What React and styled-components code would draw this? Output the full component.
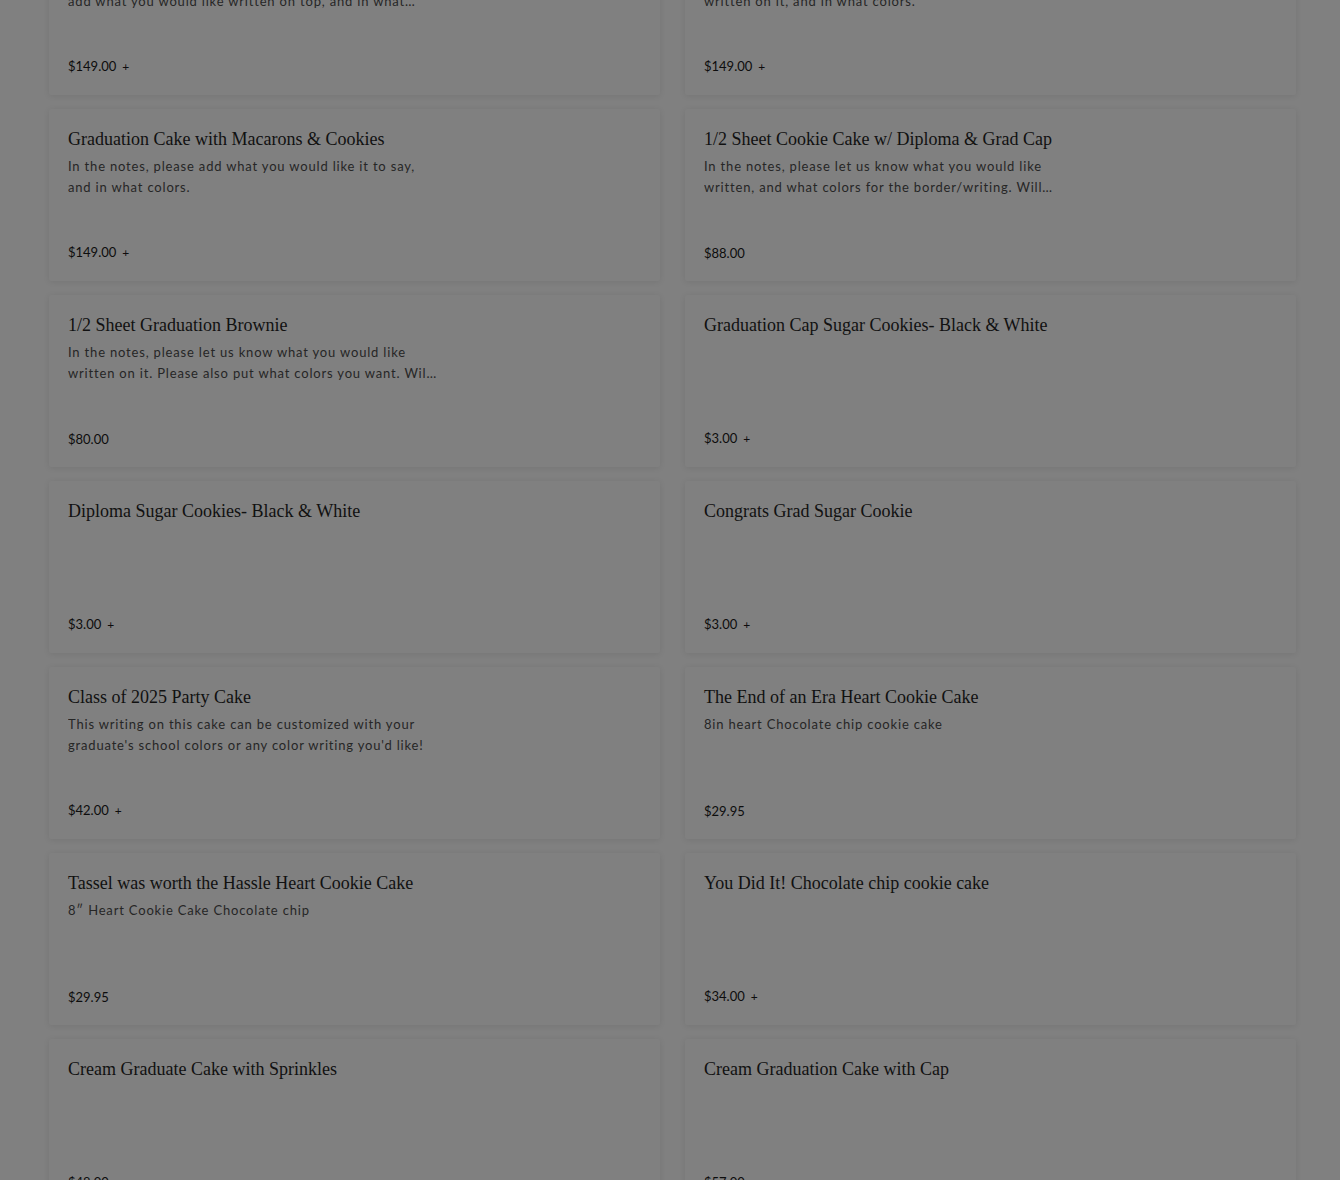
import React from "react";
import styled, { createGlobalStyle } from "styled-components";

const Global = createGlobalStyle`
  html, body { margin: 0; padding: 0; background: #808080; }
  body { font-family: Lato, "Noto Sans", sans-serif; overflow: hidden; }
`;

const Page = styled.main`
  height: 1180px;
  overflow: hidden;
  background: #808080;
`;

const Grid = styled.section`
  display: grid;
  grid-template-columns: 611px 611px;
  column-gap: 25px;
  row-gap: 14px;
  padding: 0 44px 0 49px;
  margin-top: -77px;
`;

const Card = styled.article`
  height: 172px;
  box-sizing: border-box;
  padding: 18px 19px 19px 19px;
  display: flex;
  flex-direction: column;
  background: #808080;
  box-shadow: 0 1px 6px rgba(0, 0, 0, 0.09);
  border-radius: 2px;
`;

const Title = styled.h3`
  margin: 0;
  font-family: "Liberation Serif", "Times New Roman", serif;
  font-weight: 400;
  font-size: 18px;
  line-height: 25px;
  color: #111111;
`;

const Desc = styled.p`
  margin: 4px 0 0;
  max-width: 370px;
  font-family: Lato, "Noto Sans", sans-serif;
  font-size: 13px;
  line-height: 21px;
  letter-spacing: 0.82px;
  color: #262626;
  display: -webkit-box;
  -webkit-line-clamp: 2;
  -webkit-box-orient: vertical;
  overflow: hidden;
`;

const Price = styled.div`
  margin-top: auto;
  font-family: Lato, "Noto Sans", sans-serif;
  font-size: 13px;
  line-height: 18px;
  color: #0d0d0d;
  display: flex;
  gap: 6px;
  align-items: baseline;
`;

const Plus = styled.span`
  font-size: 12px;
`;

const items = [
  {
    t: "Chocolate Graduation Cake with Cap",
    d: "Chocolate cake, with hono cream. In the notes, please add what you would like written on top, and in what colors you would like it written.",
    p: "$149.00",
    plus: true,
  },
  {
    t: "Vanilla Graduation Cake with Diploma",
    d: "In the notes, please let us know what you would like written on it, and in what colors.",
    p: "$149.00",
    plus: true,
  },
  {
    t: "Graduation Cake with Macarons & Cookies",
    d: "In the notes, please add what you would like it to say, and in what colors.",
    p: "$149.00",
    plus: true,
  },
  {
    t: "1/2 Sheet Cookie Cake w/ Diploma & Grad Cap",
    d: "In the notes, please let us know what you would like written, and what colors for the border/writing. Will feed approximately 30 people.",
    p: "$88.00",
  },
  {
    t: "1/2 Sheet Graduation Brownie",
    d: "In the notes, please let us know what you would like written on it. Please also put what colors you want. Will feed about 30 people.",
    p: "$80.00",
  },
  { t: "Graduation Cap Sugar Cookies- Black & White", p: "$3.00", plus: true },
  { t: "Diploma Sugar Cookies- Black & White", p: "$3.00", plus: true },
  { t: "Congrats Grad Sugar Cookie", p: "$3.00", plus: true },
  {
    t: "Class of 2025 Party Cake",
    d: "This writing on this cake can be customized with your graduate's school colors or any color writing you'd like!",
    p: "$42.00",
    plus: true,
  },
  {
    t: "The End of an Era Heart Cookie Cake",
    d: "8in heart Chocolate chip cookie cake",
    p: "$29.95",
  },
  {
    t: "Tassel was worth the Hassle Heart Cookie Cake",
    d: "8\u2033 Heart Cookie Cake Chocolate chip",
    p: "$29.95",
  },
  { t: "You Did It! Chocolate chip cookie cake", p: "$34.00", plus: true },
  { t: "Cream Graduate Cake with Sprinkles", p: "$48.00", plus: true },
  { t: "Cream Graduation Cake with Cap", p: "$57.00", plus: true },
];

export default function App() {
  return (
    <Page>
      <Global />
      <Grid>
        {items.map((it, i) => (
          <Card key={i}>
            <Title>{it.t}</Title>
            {it.d && <Desc>{it.d}</Desc>}
            <Price>
              <span>{it.p}</span>
              {it.plus && <Plus>+</Plus>}
            </Price>
          </Card>
        ))}
      </Grid>
    </Page>
  );
}
